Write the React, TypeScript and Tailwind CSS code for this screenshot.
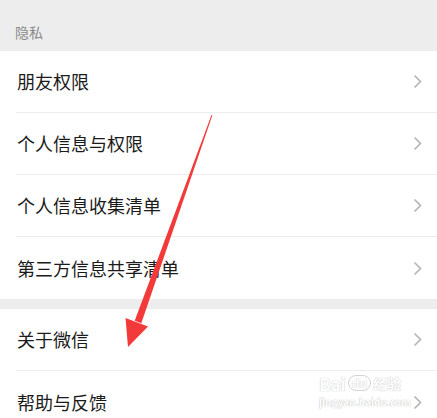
import React from "react";

const groups = [
  ["朋友权限", "个人信息与权限", "个人信息收集清单", "第三方信息共享清单"],
  ["关于微信", "帮助与反馈"],
];

function Chevron() {
  return (
    <svg width="9" height="15" viewBox="0 0 9 15" className="shrink-0">
      <path d="M1.5 1.5 L7.5 7.5 L1.5 13.5" fill="none" stroke="#b4b4b4" strokeWidth="1.6" />
    </svg>
  );
}

function Row({ label, last }: { label: string; last: boolean }) {
  return (
    <div className="bg-white pl-4">
      <div
        className={`flex h-[62px] items-center justify-between pr-[15px] ${
          last ? "" : "border-b border-[#ededed]"
        }`}
      >
        <span className="pl-px text-[18px] text-[#1b1b1b]">{label}</span>
        <Chevron />
      </div>
    </div>
  );
}

export default function App() {
  return (
    <div
      className="relative h-[418px] w-[437px] overflow-hidden bg-[#ededed]"
      style={{ fontFamily: '"Noto Sans CJK SC", "Noto Sans", sans-serif' }}
    >
      <div className="flex h-[51px] items-end pb-[8px] pl-[15px] text-[14px] text-[#8a8a8a]">
        隐私
      </div>

      <div className="flex flex-col">
        {groups[0].map((label, i) => (
          <Row key={label} label={label} last={i === groups[0].length - 1} />
        ))}
      </div>

      <div className="mt-[10px] flex flex-col">
        {groups[1].map((label, i) => (
          <Row key={label} label={label} last={i === groups[1].length - 1} />
        ))}
      </div>

      {/* watermark */}
      <div className="pointer-events-none absolute left-[319px] top-[374px] flex flex-col items-start">
        <div className="flex h-[18px] items-center gap-[2px] text-[17px] leading-none font-bold text-white [text-shadow:0_0_1px_#c9c9c9,0_0_1px_#c9c9c9]">
          <span>Bai</span>
          <span className="rounded-full border border-[#d4d4d4] px-[3px] text-[12px] leading-[14px]">du</span>
          <span className="text-[14px]">经验</span>
        </div>
        <div className="mt-[5px] text-[10px] leading-none font-bold text-white [text-shadow:0_0_1px_#c4c4c4,0_0_1px_#c4c4c4]">
          jingyan.baidu.com
        </div>
      </div>

      {/* red arrow */}
      <svg className="pointer-events-none absolute left-0 top-0" width="437" height="418">
        <polygon points="212.4,115.2 211.6,114.8 134.7,320.8 141.3,323.2" fill="#f23a3a" />
        <polygon points="128,347 125.5,318 148,326.5" fill="#f23a3a" />
      </svg>
    </div>
  );
}
